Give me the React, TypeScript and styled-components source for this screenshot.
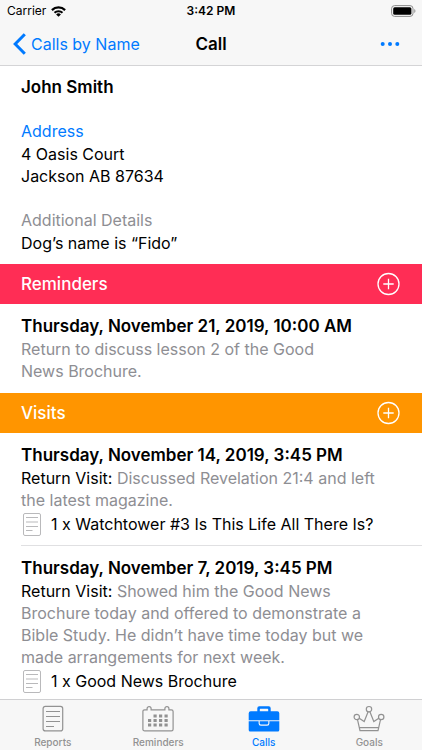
import React from 'react';
import styled, { createGlobalStyle } from 'styled-components';

const BLUE = '#007aff';
const GRAY = '#8e8e93';

const GlobalStyle = createGlobalStyle`
  * { box-sizing: border-box; }
  body {
    margin: 0;
    background: #fff;
    color: #000;
    font-family: Inter, "Liberation Sans", sans-serif;
    font-size: 16px;
    line-height: 22px;
  }
  h1, h2, h3, p, ul { margin: 0; padding: 0; font-size: inherit; }
  button { margin: 0; padding: 0; border: 0; background: none; font: inherit; cursor: pointer; }
  svg { display: block; flex: none; }
`;

const Screen = styled.div`
  display: flex;
  flex-direction: column;
  height: 100vh;
`;

const TopBar = styled.header`
  flex: none;
  background: #f7f7f7;
  border-bottom: 1px solid #d4d4d6;
`;

const ThreeColumns = styled.div`
  display: grid;
  grid-template-columns: 1fr auto 1fr;
  align-items: center;
`;

const StatusBar = styled(ThreeColumns)`
  height: 22px;
  padding: 0 6px;
  font-size: 12px;
  line-height: 16px;
`;

const Carrier = styled.span`
  display: flex;
  align-items: center;
  gap: 5px;
  padding-left: 1px;
`;

const Clock = styled.time`
  font-weight: 600;
`;

const BatterySlot = styled.span`
  justify-self: end;
`;

const NavBar = styled(ThreeColumns)`
  height: 43px;
  padding: 0 13px;
`;

const BackLink = styled.a`
  display: flex;
  align-items: center;
  gap: 5px;
  color: ${BLUE};
  text-decoration: none;
`;

const Title = styled.h1`
  font-size: 17px;
  font-weight: 600;
`;

const MoreButton = styled.button`
  justify-self: end;
  padding: 8px 7px;
`;

const Content = styled.main`
  flex: 1;
  min-height: 0;
  overflow-y: auto;
  scrollbar-width: none;
`;

const Contact = styled.section`
  padding: 10px 21px;
`;

const Name = styled.h2`
  font-size: 17px;
  font-weight: 600;
`;

const Field = styled.div`
  margin-top: 22px;
`;

const FieldLabel = styled.p<{ $color: string }>`
  color: ${(p) => p.$color};
  line-height: 23px;
`;

const SectionBar = styled.div<{ $color: string }>`
  display: flex;
  align-items: center;
  justify-content: space-between;
  height: 40px;
  padding: 0 21px;
  background: ${(p) => p.$color};
  color: #fff;
`;

const SectionTitle = styled.h2`
  font-size: 17px;
  font-weight: 500;
`;

const Entries = styled.ul`
  padding-bottom: 3px;
  list-style: none;
`;

const Entry = styled.li`
  margin-left: 21px;
  padding: 10px 20px 8px 0;
  & + & { border-top: 1px solid #e0e0e2; }
`;

const EntryDate = styled.h3`
  font-size: 17px;
  font-weight: 600;
  line-height: 24px;
`;

const Note = styled.p<{ $inset?: number }>`
  padding-right: ${(p) => p.$inset ?? 0}px;
  color: ${GRAY};
`;

const Kind = styled.span`
  color: #000;
`;

const Placement = styled.p`
  display: flex;
  align-items: center;
  gap: 10px;
  height: 26px;
  padding-left: 2px;
`;

const TabBar = styled.nav`
  flex: none;
  display: grid;
  grid-template-columns: repeat(4, 1fr);
  height: 51px;
  background: #f7f7f7;
  border-top: 1px solid #d0d0d2;
`;

const Tab = styled.a<{ $active?: boolean }>`
  display: flex;
  flex-direction: column;
  align-items: center;
  gap: 4px;
  padding-top: 5px;
  color: ${(p) => (p.$active ? BLUE : '#929292')};
  font-size: 10px;
  font-weight: 500;
  line-height: 12px;
  text-decoration: none;
`;

const WifiIcon = () => (
  <svg width="15" height="11" viewBox="0 0 15 11" fill="none" stroke="#000" aria-hidden="true">
    <path d="M.9 4.100a9.400 9.400 0 0 1 13.200 0" strokeWidth="2.200" />
    <path d="M3.500 6.800a5.700 5.700 0 0 1 8 0" strokeWidth="2" />
    <path d="M7.500 10.800 5.100 8.500a3.400 3.400 0 0 1 4.800 0z" fill="#000" stroke="none" />
  </svg>
);

const BatteryIcon = () => (
  <svg width="25" height="12" viewBox="0 0 25 12" aria-hidden="true">
    <rect x=".6" y=".6" width="21.400" height="10.800" rx="3" fill="none" stroke="#8c8c8c" />
    <rect x="2.200" y="2.200" width="18.200" height="7.600" rx="1.500" />
    <path d="M23.300 4v4c1.500-.6 1.500-3.400 0-4z" fill="#8c8c8c" />
  </svg>
);

const BackIcon = () => (
  <svg width="13" height="22" viewBox="0 0 13 22" fill="none" stroke={BLUE} strokeWidth="3" aria-hidden="true">
    <path d="M11.800 1.300 2.200 11l9.600 9.700" />
  </svg>
);

const MoreIcon = () => (
  <svg width="25" height="6" viewBox="0 0 25 6" fill={BLUE} aria-hidden="true">
    <circle cx="5.700" cy="3" r="2" />
    <circle cx="13" cy="3" r="2" />
    <circle cx="20.300" cy="3" r="2" />
  </svg>
);

const AddIcon = () => (
  <svg width="24" height="24" viewBox="0 0 24 24" fill="none" stroke="#fff" strokeWidth="1.300" aria-hidden="true">
    <circle cx="11.500" cy="12" r="10.500" />
    <path d="M11.500 6.800v10.400M6.300 12h10.400" />
  </svg>
);

const PageIcon = () => (
  <svg width="18" height="23" viewBox="0 0 18 23" fill="none" stroke="#b9b9bb" aria-hidden="true">
    <rect x=".5" y=".5" width="17" height="22" rx="1.500" />
    <path d="M3 4.500h12M3 9h12M3 13.500h12M3 17.500h6.500" />
  </svg>
);

const ReportsIcon = () => (
  <svg width="22" height="27" viewBox="0 0 22 27" fill="none" stroke="currentColor" strokeWidth="1.200" aria-hidden="true">
    <rect x="1.100" y="1.300" width="19.600" height="24.600" rx="2.200" />
    <path d="M4 6.500h14M4 11.500h14M4 16.500h14M4 21.500h8" />
  </svg>
);

const dots = [
  [12, 9.5], [17.5, 9.5], [23, 9.5],
  [6.5, 14], [12, 14], [17.5, 14], [23, 14],
  [6.5, 18.5], [12, 18.5], [17.5, 18.5], [23, 18.5],
];

const CalendarIcon = () => (
  <svg width="32" height="27" viewBox="0 0 32 27" aria-hidden="true">
    <path
      d="M2.600 4.800h2.500V3.600a2 2 0 0 1 4 0v1.200h13.800V3.600a2 2 0 0 1 4 0v1.200h2.500a1.700 1.700 0 0 1 1.700 1.700v17.700a1.700 1.700 0 0 1-1.700 1.700H2.600a1.700 1.700 0 0 1-1.700-1.700V6.500a1.700 1.700 0 0 1 1.700-1.700z"
      fill="none"
      stroke="currentColor"
      strokeWidth="1.200"
    />
    {dots.map(([x, y]) => (
      <rect key={`${x}-${y}`} x={x - 0.5} y={y} width="3.200" height="3" fill="currentColor" />
    ))}
  </svg>
);

const BriefcaseIcon = () => (
  <svg width="32" height="27" viewBox="0 0 32 27" fill="currentColor" aria-hidden="true">
    <path
      fillRule="evenodd"
      d="M9.300 6.200V3.300A2 2 0 0 1 11.300 1.300h9.400a2 2 0 0 1 2 2v2.900h6.600a2 2 0 0 1 2 2v7H.7v-7a2 2 0 0 1 2-2zM11.800 6.200h8.400V4.400a.6.600 0 0 0-.6-.6h-7.200a.6.600 0 0 0-.6.600z"
    />
    <path d="M.7 16.200h9.900v2.200a2.300 2.300 0 0 0 2.300 2.300h6.200a2.300 2.300 0 0 0 2.300-2.300v-2.200h9.900v8.700a1.500 1.500 0 0 1-1.500 1.500H2.200a1.500 1.500 0 0 1-1.500-1.500z" />
    <path d="M11.700 16.200h8.600v2a1.400 1.400 0 0 1-1.400 1.400h-5.800a1.400 1.400 0 0 1-1.400-1.400z" />
  </svg>
);

const CrownIcon = () => (
  <svg width="32" height="27" viewBox="0 0 32 27" fill="none" stroke="currentColor" strokeWidth="1.200" aria-hidden="true">
    <circle cx="16" cy="4.200" r="2.700" />
    <circle cx="3.800" cy="12" r="2.700" />
    <circle cx="28.200" cy="12" r="2.700" />
    <path d="M4.500 14.600 7 25.700h18l2.500-11.100M6.200 13.200l5 3.300 3.900-9.700M25.800 13.200l-5 3.300-3.900-9.700M6.400 22.600h19.200" />
  </svg>
);

type EntryData = { date: string; kind?: string; note: string; inset?: number; placement?: string };

const reminders: EntryData[] = [
  {
    date: 'Thursday, November 21, 2019, 10:00 AM',
    note: 'Return to discuss lesson 2 of the Good News Brochure.',
    inset: 60,
  },
];

const visits: EntryData[] = [
  {
    date: 'Thursday, November 14, 2019, 3:45 PM',
    kind: 'Return Visit:',
    note: 'Discussed Revelation 21:4 and left the latest magazine.',
    placement: '1 x Watchtower #3 Is This Life All There Is?',
  },
  {
    date: 'Thursday, November 7, 2019, 3:45 PM',
    kind: 'Return Visit:',
    note: 'Showed him the Good News Brochure today and offered to demonstrate a Bible Study. He didn’t have time today but we made arrangements for next week.',
    placement: '1 x Good News Brochure',
  },
];

const Section = ({ title, color, items }: { title: string; color: string; items: EntryData[] }) => (
  <section>
    <SectionBar $color={color}>
      <SectionTitle>{title}</SectionTitle>
      <button type="button" aria-label={`Add to ${title}`}>
        <AddIcon />
      </button>
    </SectionBar>
    <Entries>
      {items.map((item) => (
        <Entry key={item.date}>
          <EntryDate>{item.date}</EntryDate>
          <Note $inset={item.inset}>
            {item.kind && <Kind>{item.kind} </Kind>}
            {item.note}
          </Note>
          {item.placement && (
            <Placement>
              <PageIcon />
              {item.placement}
            </Placement>
          )}
        </Entry>
      ))}
    </Entries>
  </section>
);

export default function App() {
  return (
    <>
      <GlobalStyle />
      <Screen>
        <TopBar>
          <StatusBar>
            <Carrier>
              Carrier
              <WifiIcon />
            </Carrier>
            <Clock>3:42 PM</Clock>
            <BatterySlot>
              <BatteryIcon />
            </BatterySlot>
          </StatusBar>
          <NavBar>
            <BackLink href="#calls">
              <BackIcon />
              Calls by Name
            </BackLink>
            <Title>Call</Title>
            <MoreButton type="button" aria-label="More">
              <MoreIcon />
            </MoreButton>
          </NavBar>
        </TopBar>
        <Content>
          <Contact>
            <Name>John Smith</Name>
            <Field>
              <FieldLabel $color={BLUE}>Address</FieldLabel>
              <p>4 Oasis Court</p>
              <p>Jackson AB 87634</p>
            </Field>
            <Field>
              <FieldLabel $color={GRAY}>Additional Details</FieldLabel>
              <p>Dog’s name is “Fido”</p>
            </Field>
          </Contact>
          <Section title="Reminders" color="#ff2d55" items={reminders} />
          <Section title="Visits" color="#ff9500" items={visits} />
        </Content>
        <TabBar>
          <Tab href="#reports">
            <ReportsIcon />
            Reports
          </Tab>
          <Tab href="#reminders">
            <CalendarIcon />
            Reminders
          </Tab>
          <Tab href="#calls" $active aria-current="page">
            <BriefcaseIcon />
            Calls
          </Tab>
          <Tab href="#goals">
            <CrownIcon />
            Goals
          </Tab>
        </TabBar>
      </Screen>
    </>
  );
}
